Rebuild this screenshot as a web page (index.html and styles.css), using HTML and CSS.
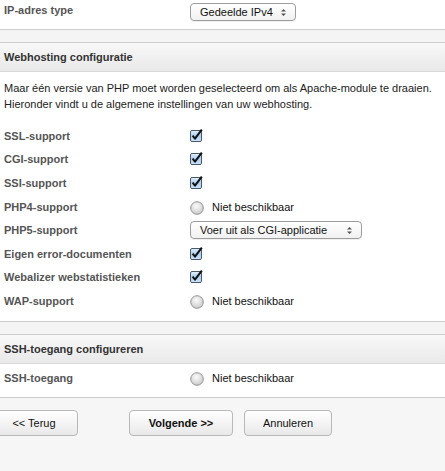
FILE: index.html
```html
<!DOCTYPE html>
<html lang="nl">
<head>
<meta charset="utf-8">
<title>Webhosting configuratie</title>
<link rel="stylesheet" href="styles.css">
</head>
<body>
<div class="page">
  <div class="form-row top-row">
    <div class="label">IP-adres type</div>
    <div class="control">
      <div class="select select-ip"><span class="select-text">Gedeelde IPv4</span><svg class="arrows" width="7" height="9" viewBox="0 0 7 9"><path d="M1 3.5 L3.5 1 L6 3.5Z M1 5.5 L3.5 8 L6 5.5Z" fill="#555"/></svg></div>
    </div>
  </div>
  <div class="band"></div>
  <div class="section-head">Webhosting configuratie</div>
  <div class="intro">
    <p>Maar één versie van PHP moet worden geselecteerd om als Apache-module te draaien.</p>
    <p>Hieronder vindt u de algemene instellingen van uw webhosting.</p>
  </div>
  <div class="rows">
    <div class="form-row"><div class="label">SSL-support</div><div class="control"><span class="check"><svg width="13" height="13" viewBox="0 0 13 13"><use href="#cb"/></svg></span></div></div>
    <div class="form-row"><div class="label">CGI-support</div><div class="control"><span class="check"><svg width="13" height="13" viewBox="0 0 13 13"><use href="#cb"/></svg></span></div></div>
    <div class="form-row"><div class="label">SSI-support</div><div class="control"><span class="check"><svg width="13" height="13" viewBox="0 0 13 13"><use href="#cb"/></svg></span></div></div>
    <div class="form-row"><div class="label">PHP4-support</div><div class="control"><span class="radio"><svg width="14" height="14" viewBox="0 0 14 14"><use href="#rb"/></svg></span><span class="na">Niet beschikbaar</span></div></div>
    <div class="form-row"><div class="label">PHP5-support</div><div class="control">
      <div class="select select-php"><span class="select-text">Voer uit als CGI-applicatie</span><svg class="arrows" width="7" height="9" viewBox="0 0 7 9"><path d="M1 3.5 L3.5 1 L6 3.5Z M1 5.5 L3.5 8 L6 5.5Z" fill="#555"/></svg></div>
    </div></div>
    <div class="form-row"><div class="label">Eigen error-documenten</div><div class="control"><span class="check"><svg width="13" height="13" viewBox="0 0 13 13"><use href="#cb"/></svg></span></div></div>
    <div class="form-row"><div class="label">Webalizer webstatistieken</div><div class="control"><span class="check"><svg width="13" height="13" viewBox="0 0 13 13"><use href="#cb"/></svg></span></div></div>
    <div class="form-row"><div class="label">WAP-support</div><div class="control"><span class="radio"><svg width="14" height="14" viewBox="0 0 14 14"><use href="#rb"/></svg></span><span class="na">Niet beschikbaar</span></div></div>
  </div>
  <div class="band"></div>
  <div class="section-head">SSH-toegang configureren</div>
  <div class="rows rows-ssh">
    <div class="form-row"><div class="label">SSH-toegang</div><div class="control"><span class="radio"><svg width="14" height="14" viewBox="0 0 14 14"><use href="#rb"/></svg></span><span class="na">Niet beschikbaar</span></div></div>
  </div>
  <div class="footer">
    <button class="btn btn-back">&lt;&lt; Terug</button>
    <button class="btn btn-next">Volgende &gt;&gt;</button>
    <button class="btn btn-cancel">Annuleren</button>
  </div>
</div>
<svg width="0" height="0" class="defs">
  <defs>
    <linearGradient id="cbg" x1="0" y1="0" x2="0" y2="1">
      <stop offset="0" stop-color="#e4f1fc"/>
      <stop offset="0.5" stop-color="#a9cdf0"/>
      <stop offset="1" stop-color="#cfe5fb"/>
    </linearGradient>
    <radialGradient id="rbg" cx="0.45" cy="0.35" r="0.7">
      <stop offset="0" stop-color="#fbfbfb"/>
      <stop offset="0.6" stop-color="#dcdcdc"/>
      <stop offset="1" stop-color="#c4c4c4"/>
    </radialGradient>
    <g id="cb">
      <rect x="0.5" y="1.5" width="11" height="11" rx="1.5" fill="url(#cbg)" stroke="#4a5a6a"/>
      <path d="M2.6 6.6 L5 9.6 L11.8 0.6" fill="none" stroke="#111" stroke-width="2" stroke-linejoin="round"/>
    </g>
    <g id="rb">
      <circle cx="7" cy="7" r="6.3" fill="url(#rbg)" stroke="#8c8c8c" stroke-width="0.9"/>
    </g>
  </defs>
</svg>
</body>
</html>
```
FILE: styles.css
```css
html, body {
  margin: 0;
  padding: 0;
}
body {
  background: #ffffff;
  font-family: "Liberation Sans", Arial, Helvetica, sans-serif;
  color: #222;
}
.defs {
  position: absolute;
  width: 0;
  height: 0;
}
.page {
  width: 445px;
  min-height: 471px;
  background: #f6f6f6;
}
.form-row {
  display: grid;
  grid-template-columns: 186px 1fr;
  align-items: center;
  height: 23.6px;
  padding-left: 4px;
}
.label {
  font-weight: bold;
  font-size: 11px;
  color: #555;
}
.control {
  display: flex;
  align-items: center;
  gap: 7px;
}
.top-row {
  height: 29px;
  background: #fff;
  border-bottom: 1px solid #cdcdcd;
  align-items: start;
}
.top-row .label {
  padding-top: 4px;
}
.top-row .control {
  padding-top: 3px;
}
.select {
  display: flex;
  align-items: center;
  justify-content: space-between;
  box-sizing: border-box;
  height: 18px;
  padding: 0 8px 0 9px;
  border: 1px solid #9d9d9d;
  border-radius: 4px;
  background: linear-gradient(#ffffff, #f1f1f1);
  box-shadow: 0 1px 0 rgba(0,0,0,0.06);
  font-family: "Liberation Sans", Arial, sans-serif;
  font-size: 11px;
  white-space: nowrap;
  color: #111;
}
.select-ip { width: 106px; }
.select-php { width: 172px; }
.band {
  height: 12px;
  background: #f4f4f4;
  border-bottom: 1px solid #cdcdcd;
}
.section-head {
  height: 28px;
  line-height: 29px;
  padding-left: 4px;
  font-size: 11px;
  font-weight: bold;
  color: #333;
  background: linear-gradient(#f8f8f8, #e9e9e9);
  border-bottom: 1px solid #d9d9d9;
}
.intro {
  background: #fff;
  padding: 8px 4px 0;
}
.intro p {
  margin: 0;
  font-size: 11px;
  line-height: 16px;
  white-space: nowrap;
  color: #222;
}
.rows {
  background: #fff;
  padding: 12px 0 8px;
  border-bottom: 1px solid #cdcdcd;
}
.rows-ssh {
  padding: 2px 0 8px;
}
.check, .radio {
  display: inline-flex;
  width: 14px;
  height: 14px;
  margin-left: 0;
}
.radio {
  margin-top: 2px;
}
.na {
  font-size: 11px;
  color: #111;
  margin-left: 1px;
}
.footer {
  display: flex;
  gap: 11px;
  padding-top: 12px;
  margin-left: -10px;
}
.btn {
  height: 26px;
  box-sizing: border-box;
  border: 1px solid #b8b8b8;
  border-radius: 4px;
  background: linear-gradient(#ffffff, #e9e9e9);
  font-family: "Liberation Sans", Arial, sans-serif;
  font-size: 11px;
  color: #111;
  padding: 0;
}
.btn-back { width: 88px; margin-right: 40px; }
.btn-next { width: 104px; font-weight: bold; }
.btn-cancel { width: 88px; }
```
